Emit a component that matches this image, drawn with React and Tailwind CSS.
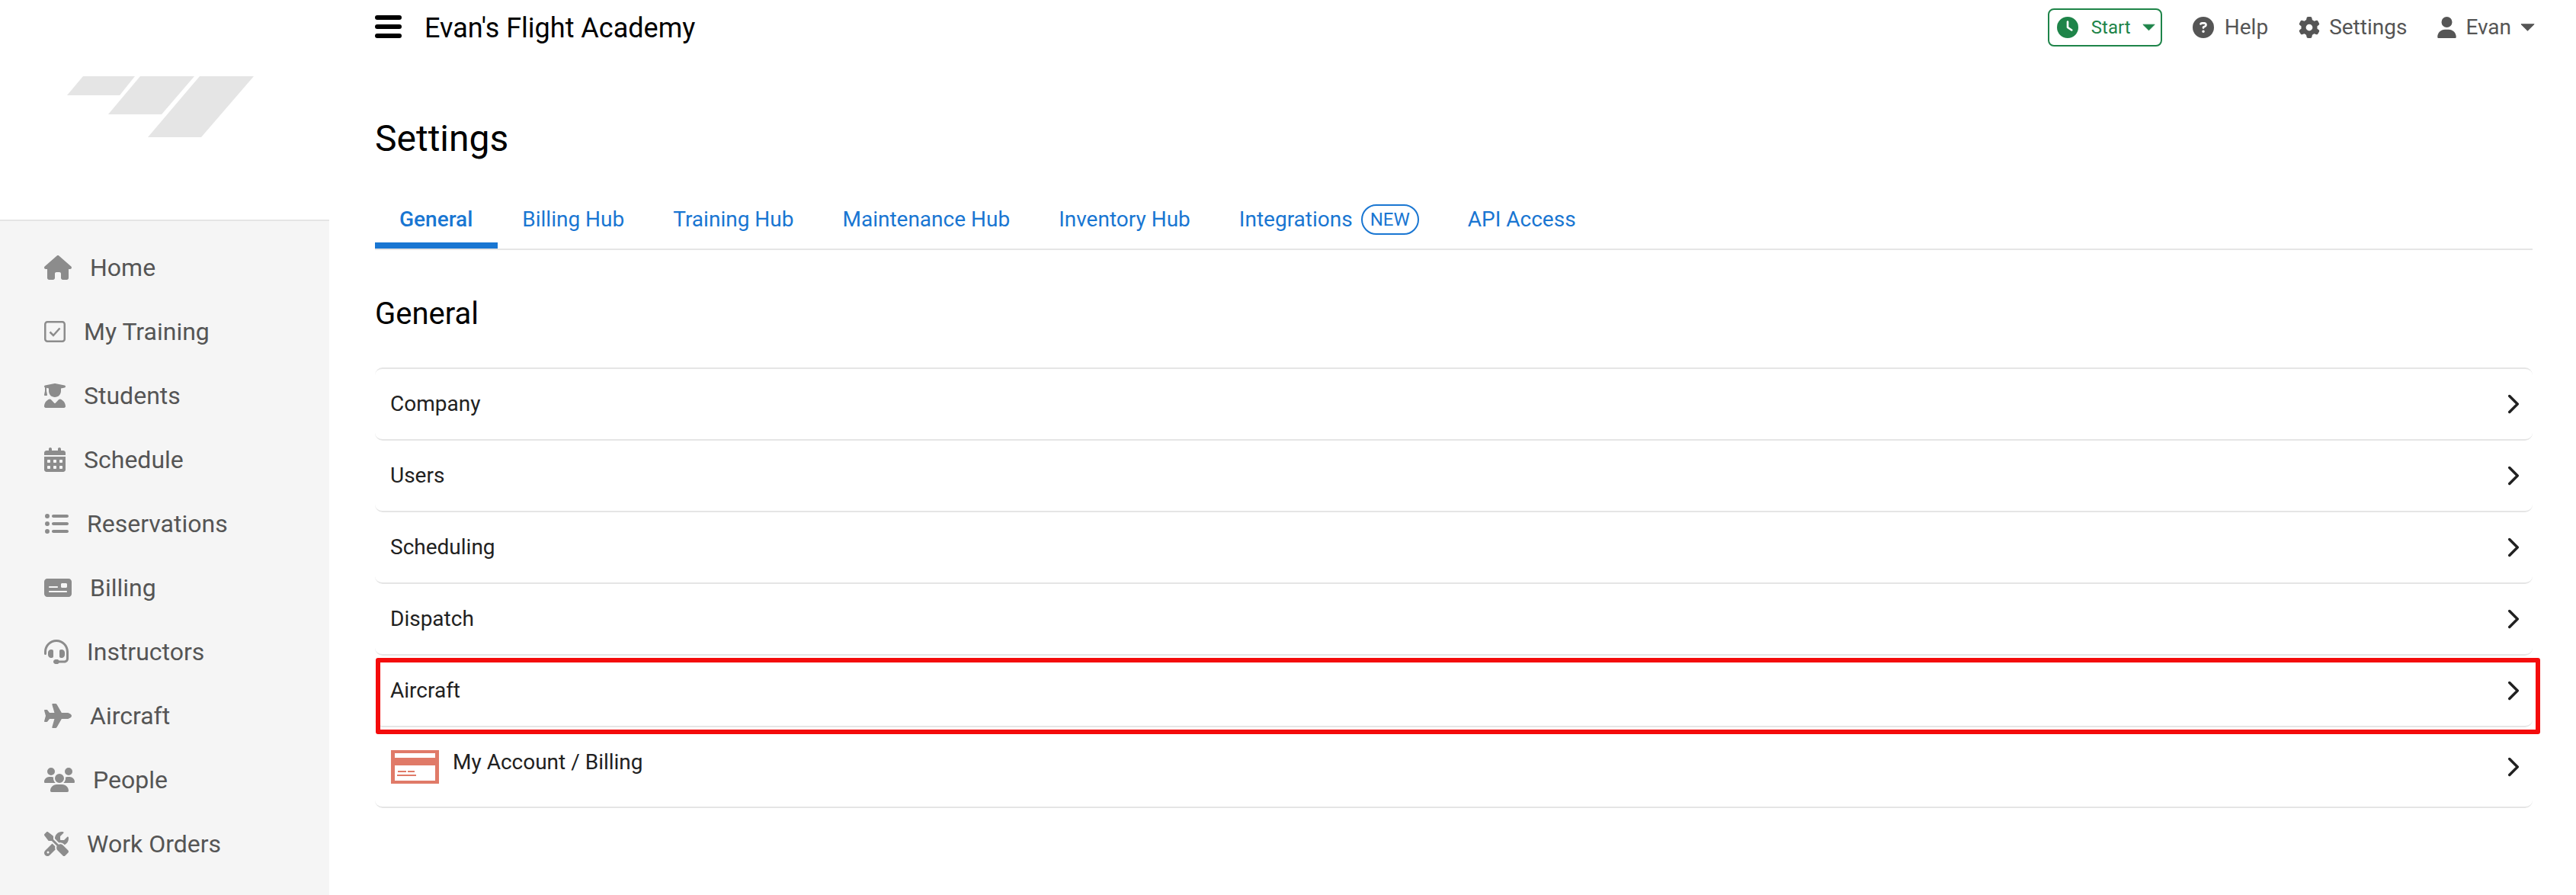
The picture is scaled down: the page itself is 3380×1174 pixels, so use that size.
import React from 'react';
import { ChevronRight } from 'lucide-react';
import {
  FaHouse, FaUserGraduate, FaCalendarDays, FaListUl, FaMoneyCheck, FaHeadset, FaPlane, FaUsers, FaScrewdriverWrench,
  FaClock, FaCircleQuestion, FaGear, FaUser,
} from 'react-icons/fa6';

const CheckBox = ({ className }) => (
  <svg viewBox="0 0 28 28" className={className} fill="none">
    <rect x="1.25" y="1.25" width="25.5" height="25.5" rx="3" stroke="currentColor" strokeWidth="2.5" />
    <path d="M7.5 14.5l4.5 4.5 8.5-9.5" stroke="currentColor" strokeWidth="2.5" />
  </svg>
);

const Caret = ({ className }) => (
  <svg viewBox="0 0 20 10" className={className} fill="currentColor" stroke="currentColor" strokeWidth="1" strokeLinejoin="round">
    <path d="M1 .5h18L10 9.5z" />
  </svg>
);

const navItems = [
  { label: 'Home', icon: FaHouse, size: 'w-[36px]' },
  { label: 'My Training', icon: CheckBox, size: 'w-[28px]' },
  { label: 'Students', icon: FaUserGraduate, size: 'w-[28px]' },
  { label: 'Schedule', icon: FaCalendarDays, size: 'w-[28px]' },
  { label: 'Reservations', icon: FaListUl, size: 'w-[32px]' },
  { label: 'Billing', icon: FaMoneyCheck, size: 'w-[36px]' },
  { label: 'Instructors', icon: FaHeadset, size: 'w-[32px]' },
  { label: 'Aircraft', icon: FaPlane, size: 'w-[36px]' },
  { label: 'People', icon: FaUsers, size: 'w-[40px]' },
  { label: 'Work Orders', icon: FaScrewdriverWrench, size: 'w-[32px]' },
];

const tabs = ['Billing Hub', 'Training Hub', 'Maintenance Hub', 'Inventory Hub'];
const rows = ['Company', 'Users', 'Scheduling', 'Dispatch', 'Aircraft'];

const Row = ({ children, className = '' }) => (
  <div className={`flex items-center justify-between pl-[20px] pr-[4px] pb-[1px] border-b-2 border-[#e5e5e5] rounded-b-[10px] ${className}`}>
    {children}
    <ChevronRight className="w-[42px] h-[42px] text-[#212121]" strokeWidth={2} />
  </div>
);

const Sidebar = () => (
  <aside className="w-[432px] shrink-0 flex flex-col bg-[#f5f5f5]">
    <div className="h-[290px] bg-white border-b-2 border-[#e5e5e5] flex">
      <svg viewBox="0 0 432 288" className="w-[432px] h-[288px]" fill="#e5e5e5">
        <polygon points="109,100 177,100 157,125 88,125" />
        <polygon points="184,100 255,100 212,150 142,150" />
        <polygon points="262,100 333,100 264,180 194,180" />
      </svg>
    </div>
    <nav className="pt-[19px] flex flex-col pl-[58px]">
      {navItems.map(({ label, icon: Icon, size }) => (
        <div key={label} className="h-[84px] flex items-center gap-[24px] text-[32px] text-[#555555]">
          <Icon className={`${size} h-[32px] text-[#8c8c8c]`} />
          <span>{label}</span>
        </div>
      ))}
    </nav>
  </aside>
);

const TopBar = () => (
  <header className="h-[72px] -mr-[6px] flex items-center justify-between">
    <div className="flex items-center gap-[30px]">
      <div className="w-[35px] mb-[2px] flex flex-col gap-[6px]">
        <span className="h-[6px] bg-black rounded-full" />
        <span className="h-[6px] bg-black rounded-full" />
        <span className="h-[6px] bg-black rounded-full" />
      </div>
      <span className="mt-[1px] text-[36px] text-black">Evan's Flight Academy</span>
    </div>
    <div className="flex items-center text-[28px] text-[#555555]">
      <div className="w-[150px] h-[50px] flex items-center pl-[10px] border-2 border-[#1e8449] rounded-[8px] text-[#1e8449] text-[24px]">
        <FaClock className="w-[28px] h-[28px]" />
        <span className="ml-[17px]">Start</span>
        <Caret className="ml-[15px] w-[17px] h-[10px]" />
      </div>
      <FaCircleQuestion className="ml-[40px] w-[28px] h-[28px]" />
      <span className="ml-[14px]">Help</span>
      <FaGear className="ml-[40px] w-[28px] h-[28px]" />
      <span className="ml-[12px]">Settings</span>
      <FaUser className="ml-[40px] w-[25px] h-[28px]" />
      <span className="ml-[12px]">Evan</span>
      <Caret className="ml-[12px] mr-[3px] w-[19px] h-[10px]" />
    </div>
  </header>
);

const App = () => (
  <div className="relative w-[3380px] h-[1174px] overflow-hidden flex bg-white font-['Roboto',sans-serif]">
    <Sidebar />
    <main className="flex-1 pl-[60px] pr-[57px]">
      <TopBar />
      <h1 className="mt-[74px] text-[48px] leading-[72px] text-black">Settings</h1>
      <div className="mt-[36px] h-[74px] flex items-start border-b-2 border-[#e5e5e5] text-[28px] text-[#1976d2]">
        <div className="pl-[32px] pr-[33px] pt-[3px] h-[72px] flex items-center font-medium border-b-8 border-[#1976d2]">General</div>
        {tabs.map((t) => (
          <div key={t} className="px-[32px] pb-[5px] h-[72px] flex items-center">{t}</div>
        ))}
        <div className="px-[32px] pb-[5px] h-[72px] flex items-center">
          Integrations
          <span className="ml-[11px] h-[40px] px-[10px] flex items-center rounded-full border-2 border-[#1976d2] text-[24px]">NEW</span>
        </div>
        <div className="px-[32px] pb-[5px] h-[72px] flex items-center">API Access</div>
      </div>
      <h2 className="mt-[54px] text-[40px] leading-[60px] text-black">General</h2>
      <div className="mt-[40px] border-t-2 border-[#e5e5e5] rounded-t-[10px] text-[28px] text-[#212121]">
        {rows.map((r) => (
          <Row key={r} className="h-[94px]">{r}</Row>
        ))}
        <Row className="h-[106px]">
          <div className="flex items-start gap-[18px] ml-[1px]">
            <svg viewBox="0 0 63 44" className="w-[63px] h-[44px]">
              <rect width="63" height="44" fill="#e07a68" />
              <rect x="5" y="4" width="53" height="6" fill="#fff" />
              <rect x="5" y="20" width="53" height="20" fill="#fff" />
              <rect x="9" y="27" width="11" height="2" fill="#e07a68" />
              <rect x="22" y="27" width="9" height="2" fill="#e07a68" />
              <rect x="8" y="32" width="25" height="2" fill="#e07a68" />
            </svg>
            <span className="leading-[32px]">My Account / Billing</span>
          </div>
        </Row>
      </div>
    </main>
    <div className="absolute left-[493px] top-[863px] w-[2840px] h-[100px] border-[6px] border-[#f40b0b] rounded-[3px]" />
  </div>
);

export default App;
